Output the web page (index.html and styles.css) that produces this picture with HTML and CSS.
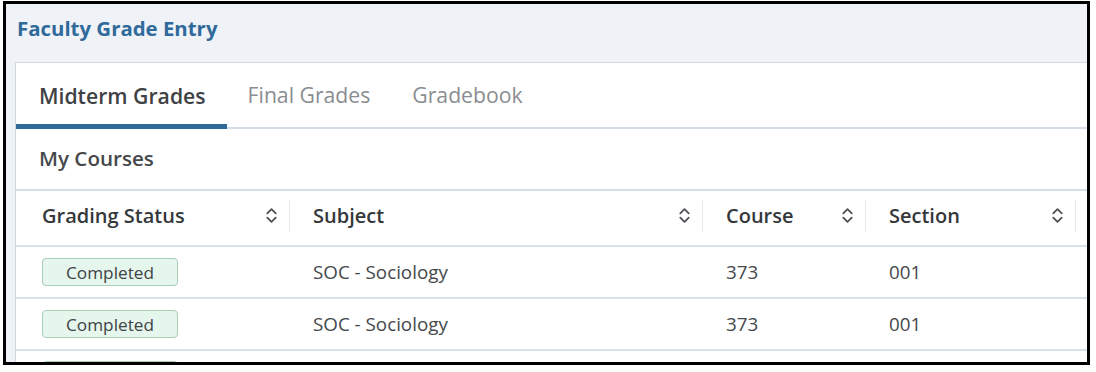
FILE: index.html
```html
<!DOCTYPE html>
<html>
<head>
<meta charset="utf-8">
<link rel="stylesheet" href="styles.css">
</head>
<body>
<div class="frame">
  <div class="page">
    <h1 class="title">Faculty Grade Entry</h1>
    <div class="card">
      <div class="tabs">
        <div class="tab active">Midterm Grades</div>
        <div class="tab">Final Grades</div>
        <div class="tab">Gradebook</div>
      </div>
      <div class="section-title">My Courses</div>
      <div class="table">
        <div class="row head">
          <div class="cell c1"><span>Grading Status</span><svg class="sort" viewBox="0 0 12 18"><path d="M2 7 L6 3 L10 7 M2 11 L6 15 L10 11"/></svg></div>
          <div class="cell"><span>Subject</span><svg class="sort" viewBox="0 0 12 18"><path d="M2 7 L6 3 L10 7 M2 11 L6 15 L10 11"/></svg></div>
          <div class="cell"><span>Course</span><svg class="sort" viewBox="0 0 12 18"><path d="M2 7 L6 3 L10 7 M2 11 L6 15 L10 11"/></svg></div>
          <div class="cell"><span>Section</span><svg class="sort" viewBox="0 0 12 18"><path d="M2 7 L6 3 L10 7 M2 11 L6 15 L10 11"/></svg></div>
          <div class="cell rest"></div>
        </div>
        <div class="row">
          <div class="cell c1"><span class="badge">Completed</span></div>
          <div class="cell">SOC - Sociology</div>
          <div class="cell">373</div>
          <div class="cell">001</div>
          <div class="cell rest"></div>
        </div>
        <div class="row">
          <div class="cell c1"><span class="badge">Completed</span></div>
          <div class="cell">SOC - Sociology</div>
          <div class="cell">373</div>
          <div class="cell">001</div>
          <div class="cell rest"></div>
        </div>
        <div class="row partial">
          <div class="cell c1"><span class="badge"></span></div>
          <div class="cell"></div>
          <div class="cell"></div>
          <div class="cell"></div>
          <div class="cell rest"></div>
        </div>
      </div>
    </div>
  </div>
</div>
</body>
</html>
```

FILE: styles.css
```css
* { box-sizing: border-box; }
html, body {
  margin: 0;
  padding: 0;
  background: #ffffff;
  font-family: "Open Sans", "Liberation Sans", sans-serif;
}
.frame {
  margin: 1px 0 0 3px;
  width: 1087px;
  height: 364px;
  border: 3px solid #000;
  overflow: hidden;
}
.page {
  background: #eff3f8;
  height: 100%;
  padding: 0 0 0 9px;
}
.title {
  margin: 0;
  padding: 11px 0 0 2px;
  height: 58px;
  font-size: 20.4px;
  font-weight: 700;
  color: #2f6a9b;
  line-height: 26px;
}
.card {
  background: #fff;
  border: 1px solid #cfd8e3;
  margin-right: -30px;
  height: 400px;
}
.tabs {
  display: flex;
  height: 66px;
  border-bottom: 2px solid #d5dde7;
}
.tab {
  padding: 0 21px;
  font-size: 21.2px;
  color: #8a8d91;
  display: flex;
  align-items: center;
  line-height: 1;
}
.tab.active {
  padding-left: 23px;
  color: #3f4245;
  font-weight: 600;
  border-bottom: 5px solid #2f6b9a;
  margin-bottom: -2px;
  padding-top: 5px;
}
.section-title {
  height: 62px;
  padding: 0 0 2px 23px;
  display: flex;
  align-items: center;
  font-size: 20.6px;
  font-weight: 600;
  color: #45484b;
  border-bottom: 2px solid #d5dde7;
}
.table {
  display: flex;
  flex-direction: column;
}
.row {
  display: grid;
  grid-template-columns: 274px 413px 163px 210px 1fr;
  height: 52px;
  border-bottom: 2px solid #dae1ea;
  font-size: 18.8px;
  color: #45484b;
}
.row.partial { height: 50px; }
.row.head {
  height: 56px;
  font-weight: 600;
  font-size: 20px;
  color: #35383b;
}
.cell {
  display: flex;
  align-items: center;
  padding: 0 12px 0 23px;
  position: relative;
}
.head .cell { padding-bottom: 5px; }
.cell.c1 { padding-left: 26px; }
.head .cell span { flex: 1; }
.head .cell:not(.rest)::after {
  content: "";
  position: absolute;
  right: 0;
  top: 9px;
  bottom: 13px;
  width: 1px;
  background: #e6e9ed;
}
.sort {
  width: 13px;
  height: 19px;
  fill: none;
  stroke: #4d5054;
  stroke-width: 1.7;
  stroke-linecap: round;
  stroke-linejoin: round;
}
.badge {
  display: inline-flex;
  align-items: center;
  justify-content: center;
  width: 136px;
  height: 28px;
  background: #e5f6ed;
  border: 1px solid #a9ceb5;
  border-radius: 4px;
  font-size: 17.2px;
  color: #3f4245;
}
```
